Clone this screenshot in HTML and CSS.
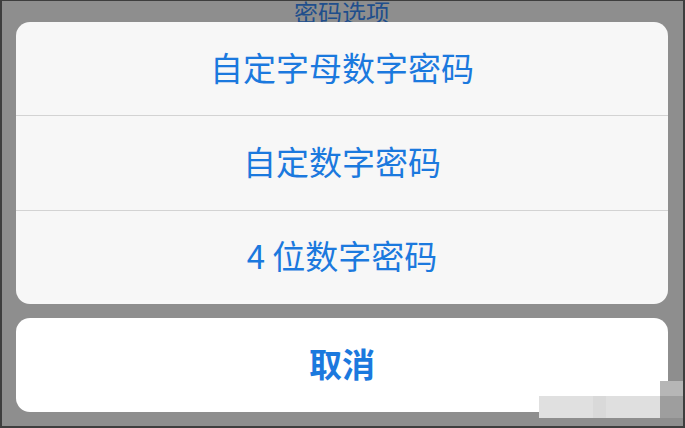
FILE: index.html
```html
<!DOCTYPE html>
<html lang="zh-CN">
<head>
<meta charset="utf-8">
<title>密码选项</title>
<link rel="stylesheet" href="styles.css">
</head>
<body>
<div class="frame">
  <div class="title">密码选项</div>
  <div class="sheet">
    <div class="option">自定字母数字密码</div>
    <div class="option">自定数字密码</div>
    <div class="option">4 位数字密码</div>
  </div>
  <div class="cancel">取消</div>
  <div class="mosaic">
    <div class="m-light"></div>
    <div class="m-side">
      <div class="m-top"></div>
      <div class="m-bot"></div>
    </div>
  </div>
</div>
</body>
</html>
```

FILE: styles.css
```css
* { box-sizing: border-box; }
html, body {
  margin: 0;
  padding: 0;
  width: 685px;
  height: 428px;
  overflow: hidden;
}
body {
  font-family: "Noto Sans CJK SC", "Noto Sans", sans-serif;
}
.frame {
  position: relative;
  width: 685px;
  height: 428px;
  background: #8e8e8e;
  border-style: solid;
  border-color: #3e3e3e;
  border-width: 1px 2px 2px 2px;
  padding: 0 15px 0 14px;
  display: flex;
  flex-direction: column;
}
.title {
  height: 21px;
  line-height: 22px;
  font-size: 24px;
  color: #204e8c;
  text-align: center;
  overflow: visible;
  white-space: nowrap;
}
.sheet {
  position: relative;
  background: #f7f7f7;
  border-radius: 14px;
  height: 282px;
  display: flex;
  flex-direction: column;
  overflow: hidden;
}
.option {
  flex: 1;
  display: flex;
  align-items: center;
  justify-content: center;
  font-size: 33px;
  color: #1b79de;
  border-top: 1px solid #d3d3d3;
  padding-bottom: 4px;
}
.option:first-child {
  border-top: none;
}
.cancel {
  margin-top: 14px;
  height: 94px;
  background: #ffffff;
  border-radius: 14px;
  display: flex;
  align-items: center;
  justify-content: center;
  font-size: 33px;
  font-weight: 700;
  color: #1b79de;
  padding-bottom: 4px;
}
.mosaic {
  position: absolute;
  left: 537px;
  top: 380px;
  width: 144px;
  height: 37px;
  display: flex;
  align-items: flex-end;
}
.m-light {
  width: 121px;
  height: 22px;
  background: linear-gradient(90deg, #e0e0e0 0%, #e0e0e0 45%, #d9d9d9 45%, #d9d9d9 55%, #dfdfdf 55%, #dfdfdf 100%);
}
.m-side {
  width: 23px;
  height: 37px;
  display: flex;
  flex-direction: column;
}
.m-top {
  height: 15px;
  background: #b6b6b6;
}
.m-bot {
  flex: 1;
  background: #9e9e9e;
}
```
